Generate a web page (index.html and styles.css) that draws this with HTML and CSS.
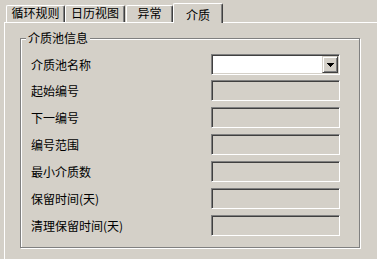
FILE: index.html
```html
<!DOCTYPE html>
<html>
<head>
  <title>介质</title>
  <link rel="stylesheet" href="styles.css">
</head>
<body>
  <div class="tabs">
    <div class="tab tab-rules">循环规则</div>
    <div class="tab tab-calendar">日历视图</div>
    <div class="tab tab-errors">异常</div>
    <div class="tab tab-active">介质</div>
  </div>

  <div class="panel">
    <fieldset class="group">
      <legend>介质池信息</legend>

      <div class="row row-first">
        <label>介质池名称</label>
        <div class="combo">
          <span class="combo-btn">
            <svg width="7" height="4" viewBox="0 0 7 4"><path d="M0 0h7v1H0zM1 1h5v1H1zM2 2h3v1H2zM3 3h1v1H3z" fill="#000"/></svg>
          </span>
        </div>
      </div>
      <div class="row"><label>起始编号</label><input class="field" disabled></div>
      <div class="row"><label>下一编号</label><input class="field" disabled></div>
      <div class="row"><label>编号范围</label><input class="field" disabled></div>
      <div class="row"><label>最小介质数</label><input class="field" disabled></div>
      <div class="row"><label>保留时间(天)</label><input class="field" disabled></div>
      <div class="row"><label>清理保留时间(天)</label><input class="field" disabled></div>
    </fieldset>
  </div>
</body>
</html>
```

FILE: styles.css
```css
html, body {
  margin: 0;
  overflow: hidden;
}
body {
  background: #d4d0c8;
  font-family: "Noto Sans CJK SC", "Liberation Sans", sans-serif;
  font-size: 12px;
  color: #000;
  width: 377px;
  height: 259px;
}

/* tab strip */
.tabs {
  display: flex;
  align-items: flex-end;
  height: 22px;
}
.tab {
  box-sizing: border-box;
  height: 17px;
  line-height: 14px;
  text-align: center;
  background: #d4d0c8;
  border-top: 1px solid #fff;
  border-left: 1px solid #fff;
  border-right: 1px solid #404040;
  border-radius: 2px 2px 0 0;
  box-shadow: inset -1px 0 #808080;
}
.tab-rules {
  margin-left: 6px;
  width: 59px;
}
.tab-calendar {
  width: 60px;
}
.tab-errors {
  margin-left: 1px;
  width: 47px;
}
.tab-active {
  position: relative;
  z-index: 1;
  width: 50px;
  height: 20px;
  margin-bottom: -1px;
  padding-top: 4px;
}

/* page body, right and bottom edges lie outside the window */
.panel {
  box-sizing: border-box;
  margin-left: 4px;
  height: 237px;
  border-top: 1px solid #fff;
  border-left: 1px solid #fff;
}

.group {
  box-sizing: border-box;
  width: 340px;
  margin: 8px 0 0 15px;
  padding: 6px 0 8px 5px;
  border: 1px solid #808080;
  box-shadow: inset 1px 1px #fff, 1px 1px #fff;
  min-width: 0;
}
.group legend {
  padding: 0 2px;
  line-height: 14px;
  background: #d4d0c8;
}

.row {
  display: flex;
  align-items: flex-start;
  box-sizing: border-box;
  height: 27px;
  padding: 3px 0 0 5px;
}
.row-first {
  height: 26px;
}
.row label {
  width: 180px;
  line-height: 21px;
}

.field, .combo {
  box-sizing: border-box;
  width: 129px;
  height: 21px;
  margin: 0;
  padding: 0;
  border: 1px solid;
  border-color: #808080 #fff #fff #808080;
  box-shadow: inset 1px 1px #404040, inset -1px -1px #d4d0c8;
  background: #d4d0c8;
  font: inherit;
}

.combo {
  display: flex;
  justify-content: flex-end;
  padding: 1px;
  background: #fff;
}
.combo-btn {
  box-sizing: border-box;
  display: flex;
  align-items: center;
  justify-content: center;
  width: 16px;
  height: 17px;
  background: #d4d0c8;
  border: 1px solid;
  border-color: #d4d0c8 #404040 #404040 #d4d0c8;
  box-shadow: inset 1px 1px #fff, inset -1px -1px #808080;
}
.combo-btn svg {
  display: block;
}
```
